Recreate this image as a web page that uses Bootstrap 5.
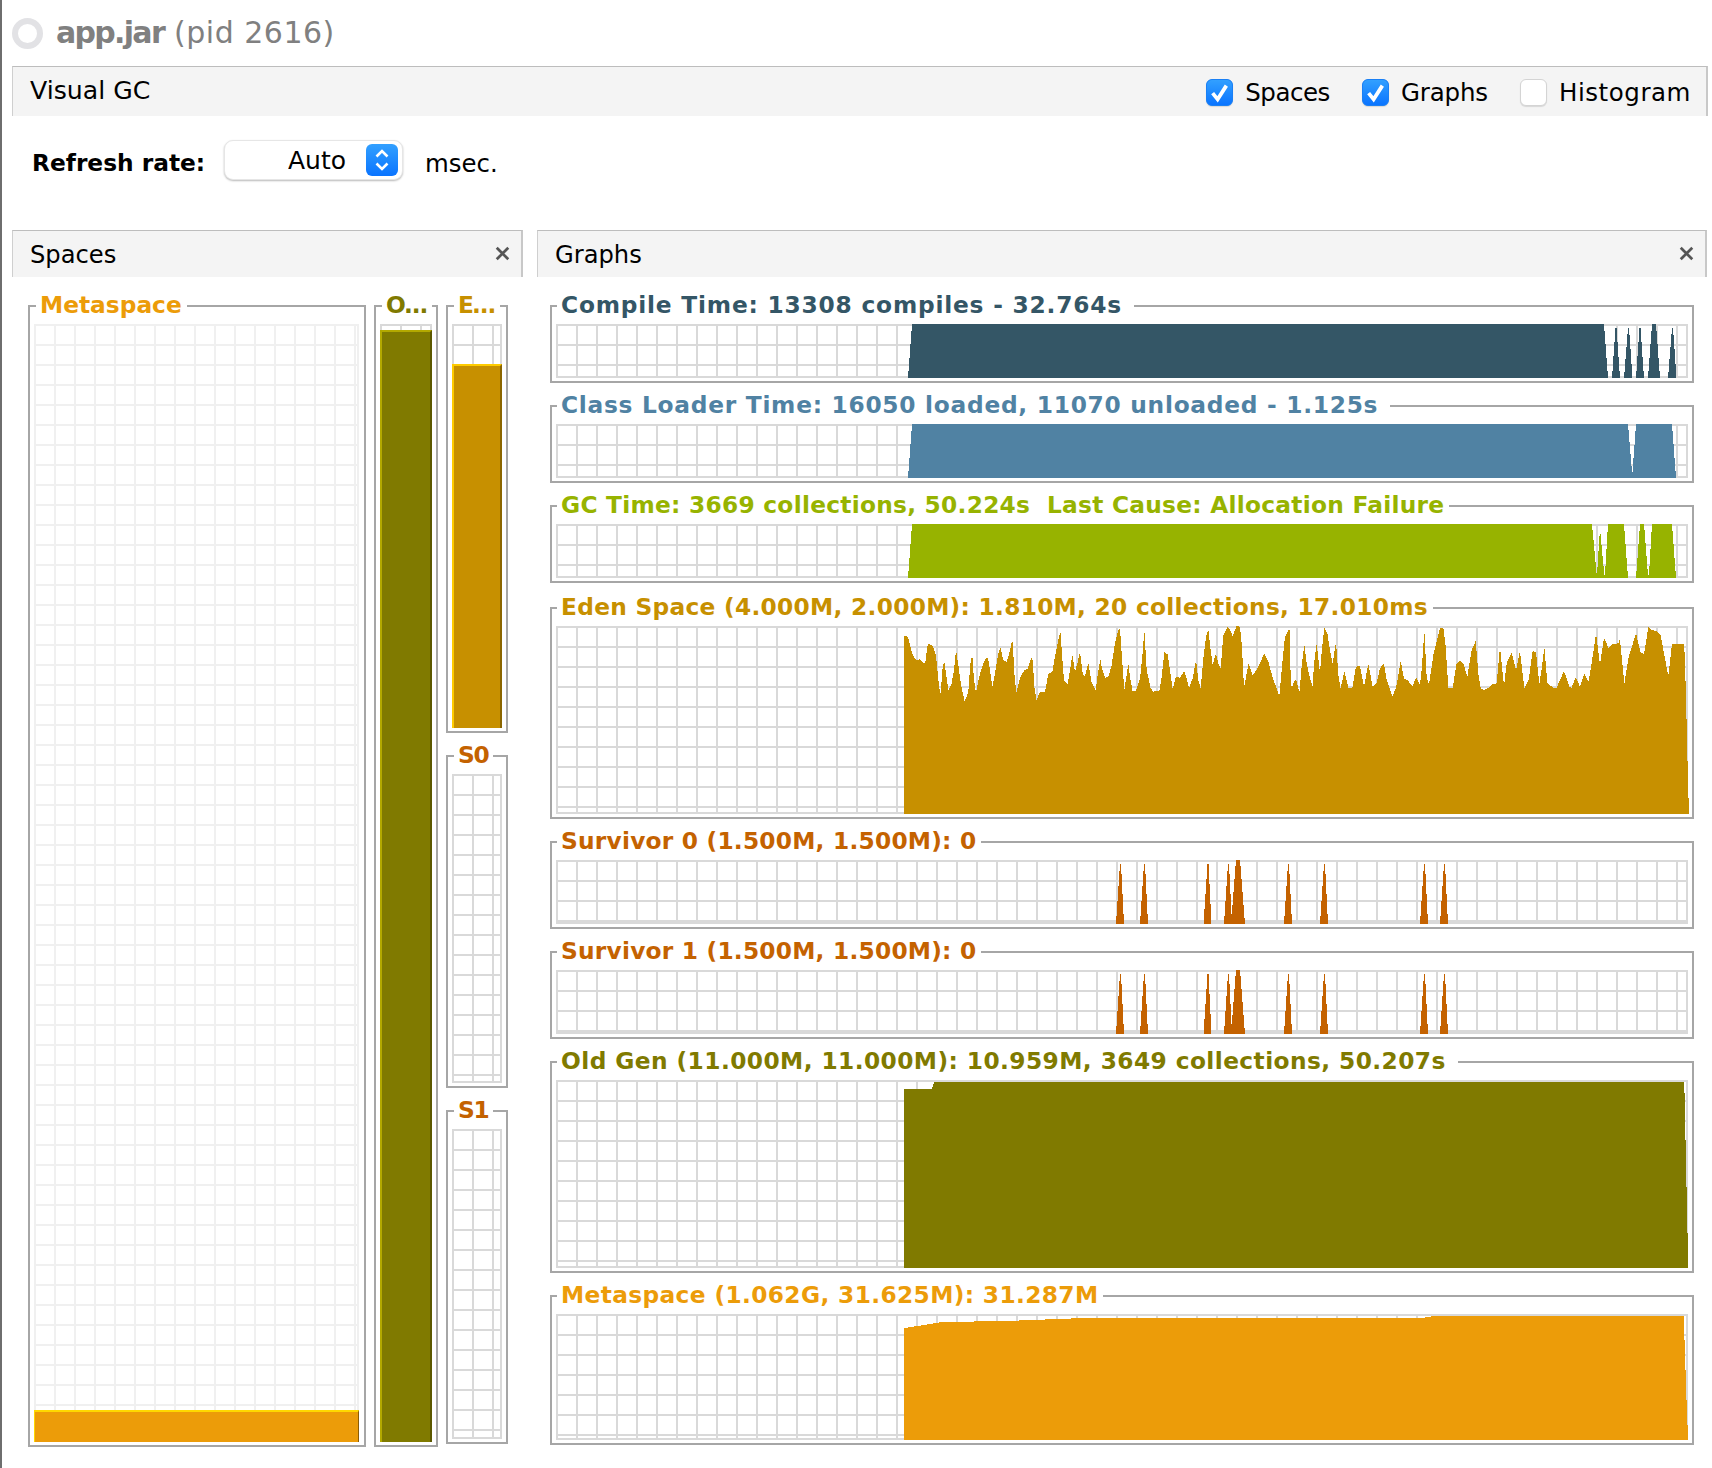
<!DOCTYPE html>
<html lang="en">
<head>
<meta charset="utf-8">
<title>Visual GC</title>
<link href="https://cdn.jsdelivr.net/npm/bootstrap@5.3.0/dist/css/bootstrap.min.css" rel="stylesheet">
<style>
html,body{background:#fff;}
body{font-family:"DejaVu Sans",sans-serif;color:#000;font-size:24.5px;line-height:1.2;}
.shell{border-left:2px solid #6e6e6e;height:1468px;width:1712px;overflow:hidden;padding-right:4px;}
.app-head{height:66px;padding-left:10px;gap:13px;}
.ring{width:31px;height:31px;flex:none;border:6px solid #e2e2e5;border-radius:50%;}
.app-title{font-size:30px;color:#808080;letter-spacing:.5px;}
.app-title b{letter-spacing:-1.7px;margin-right:0;}
.tabbar{margin-left:10px;height:50px;background:#f4f4f4;border-top:1px solid #bdbdbd;border-left:1px solid #cfcfcf;border-right:2px solid #c8c8c8;padding-left:17px;padding-right:15px;}
.tab-name{font-size:25.2px;}
.chk-row{gap:32px;padding-top:3px;}
.chk-item{gap:12px;}
.ls-sp{letter-spacing:-.45px;}
.ls-gr{letter-spacing:-.15px;}
.ls-hi{letter-spacing:.55px;}
.tabbar .form-check-input{width:27px;height:27px;flex:none;margin:0;border-radius:6px;border:1px solid #d4d4d4;box-shadow:0 1px 1px rgba(0,0,0,.12);}
.tabbar .form-check-input:checked{border-color:#1a80f5;background-color:#0a7bff;background-size:25px 25px,auto;background-position:center;background-repeat:no-repeat;background-image:url("data:image/svg+xml,%3csvg xmlns='http://www.w3.org/2000/svg' viewBox='0 0 20 20'%3e%3cpath fill='none' stroke='%23fff' stroke-width='3' d='M4.5 10.500l4 5 7-11'/%3e%3c/svg%3e"),linear-gradient(#32a0ff,#0a74ff);}
.rate-row{height:114px;padding-left:30px;padding-bottom:26px;}
.rate-lbl{font-size:23.3px;font-weight:700;width:192px;padding-top:5px;}
.rate-sel{width:179px;height:40px;padding:2px 0 0 63px;font-size:25px;line-height:36px;color:#000;border:1px solid #e6e6e6;border-radius:9px;box-shadow:0 1px 2px rgba(0,0,0,.28);background-color:#fff;background-repeat:no-repeat;background-position:right 4px center;background-size:32px 32px;background-image:url("data:image/svg+xml,%3csvg xmlns='http://www.w3.org/2000/svg' viewBox='0 0 32 32'%3e%3cdefs%3e%3clinearGradient id='g' x2='0' y2='1'%3e%3cstop offset='0' stop-color='%2332a0ff'/%3e%3cstop offset='1' stop-color='%230a74ff'/%3e%3c/linearGradient%3e%3c/defs%3e%3crect width='32' height='32' rx='6' fill='url(%23g)'/%3e%3cpath fill='none' stroke='%23fff' stroke-width='2.6' d='M10.500 12.500l5.500-5.500 5.500 5.500M10.500 19.500l5.500 5.500 5.500-5.500'/%3e%3c/svg%3e");}
.rate-unit{margin-left:22px;font-size:24.4px;padding-top:7px;}
.panels{margin-left:10px;gap:14px;}
.pane-spaces{width:511px;flex:none;}
.pane-graphs{width:1170px;flex:none;}
.pane-head{height:47px;background:#f4f4f4;border-top:1px solid #bdbdbd;border-left:1px solid #cfcfcf;border-right:2px solid #c8c8c8;padding:3px 11px 0 17px;font-size:24.2px;}
.xmark{width:15px;height:15px;display:block;margin-top:-4px;}
.spaces-body{padding:28px 0 0 16px;gap:8px;}
.col-e{gap:22px;width:62px;flex:none;}
.gbox{border:2px solid #a6a6a6;padding:0 4px 3px;}
.sbox{border:2px solid #a6a6a6;padding:0 5px 3px 4px;flex:none;}
.sbox-o{width:64px;padding-right:4px;}
.sbox-e{width:62px;padding-right:4px;}
.sbox-m{width:338px;}
.ttl{font-weight:700;font-size:23.3px;line-height:26px;height:26px;white-space:nowrap;background:#fff;width:fit-content;margin:-15px 0 6px 2px;padding:0 5px 0 4px;}
.gbox .ttl{margin-left:1px;}
.ttl-wide{padding-right:12px;}
.ls-ct{letter-spacing:.8px;}.ls-cl{letter-spacing:.73px;}.ls-gc{letter-spacing:.26px;}.ls-ed{letter-spacing:.28px;}.ls-su{letter-spacing:.22px;}.ls-ol{letter-spacing:.42px;}.ls-me{letter-spacing:.36px;}
.ls-sh{letter-spacing:-1.3px;}
.plot{background-color:#fff;background-image:linear-gradient(to right,var(--gl) 2px,transparent 2px),linear-gradient(to bottom,var(--gl) 2px,transparent 2px);background-size:20px 20px;border-right:2px solid var(--gl);border-bottom:2px solid var(--gl);--gl:#d9d9d9;}
.plot-light{--gl:#f0f0f0;}
.plot svg{display:block;overflow:visible;margin:0 -2px -2px 0;}
.gbody{padding:28px 13px 0 13px;}
.gbody .gbox+.gbox{margin-top:22px;}
.gbody .gbox.gap-wide{margin-top:24px;}
.h54{height:54px;}.h188{height:188px;}.h64{height:64px;}.h126{height:126px;}
.h1118{height:1118px;}.h404{height:404px;}.h309{height:309px;}.h310{height:310px;}
.c-meta{color:#ec9c09;}.c-old{color:#807a00;}.c-eden{color:#c79000;}.c-sur{color:#c46200;}.c-gc{color:#97b300;}.c-cl{color:#5082a3;}.c-ct{color:#345666;}
svg polygon,svg path{shape-rendering:crispEdges;}
.fill-m{background:#ec9c09;border-top:2px solid #ffd800;border-left:1px solid #ffd800;border-right:1px solid #8a5c05;margin:0 -2px -2px 0;}
.fill-o{background:#807a00;border-top:2px solid #b3a900;border-left:2px solid #b3a900;border-right:2px solid #5c5800;margin:0 -2px -2px 0;}
.fill-e{background:#c79000;border-top:2px solid #ffcc00;border-left:2px solid #ffcc00;border-right:2px solid #8b6600;margin:0 -2px -2px 0;}
</style>
</head>
<body>
<div class="shell">
  <div class="app-head d-flex align-items-center">
    <div class="ring"></div>
    <div class="app-title"><b>app.jar</b> (pid 2616)</div>
  </div>
  <div class="tabbar d-flex align-items-center justify-content-between">
    <div class="tab-name">Visual GC</div>
    <div class="chk-row d-flex align-items-center">
      <label class="chk-item d-flex align-items-center ls-sp"><input class="form-check-input" type="checkbox" checked> Spaces</label>
      <label class="chk-item d-flex align-items-center ls-gr"><input class="form-check-input" type="checkbox" checked> Graphs</label>
      <label class="chk-item d-flex align-items-center ls-hi"><input class="form-check-input" type="checkbox"> Histogram</label>
    </div>
  </div>
  <div class="rate-row d-flex align-items-center">
    <div class="rate-lbl">Refresh rate:</div>
    <select class="form-select rate-sel"><option>Auto</option></select>
    <div class="rate-unit">msec.</div>
  </div>
  <div class="panels d-flex">
    <div class="pane-spaces">
      <div class="pane-head d-flex align-items-center justify-content-between">
        <div>Spaces</div>
        <svg class="xmark" viewBox="0 0 13 13"><path d="M1.500 1.500l10 10M11.500 1.500l-10 10" stroke="#555" stroke-width="2.4" fill="none" style="shape-rendering:auto"/></svg>
      </div>
      <div class="spaces-body d-flex">
        <div class="sbox sbox-m">
          <div class="ttl c-meta">Metaspace</div>
          <div class="plot plot-light h1118 d-flex flex-column justify-content-end"><div class="fill-m" style="height:32px"></div></div>
        </div>
        <div class="sbox sbox-o">
          <div class="ttl c-old ls-sh">O…</div>
          <div class="plot h1118 d-flex flex-column justify-content-end"><div class="fill-o" style="height:1112px"></div></div>
        </div>
        <div class="col-e d-flex flex-column">
          <div class="sbox sbox-e">
            <div class="ttl c-eden ls-sh">E…</div>
            <div class="plot h404 d-flex flex-column justify-content-end"><div class="fill-e" style="height:364px"></div></div>
          </div>
          <div class="sbox sbox-e">
            <div class="ttl c-sur ls-sh">S0</div>
            <div class="plot h309"></div>
          </div>
          <div class="sbox sbox-e">
            <div class="ttl c-sur ls-sh">S1</div>
            <div class="plot h310"></div>
          </div>
        </div>
      </div>
    </div>
    <div class="pane-graphs">
      <div class="pane-head d-flex align-items-center justify-content-between">
        <div>Graphs</div>
        <svg class="xmark" viewBox="0 0 13 13"><path d="M1.500 1.500l10 10M11.500 1.500l-10 10" stroke="#555" stroke-width="2.4" fill="none" style="shape-rendering:auto"/></svg>
      </div>
      <div class="gbody">
        <div class="gbox">
          <div class="ttl ttl-wide c-ct ls-ct">Compile Time: 13308 compiles - 32.764s</div>
          <div class="plot h54"><svg width="1132" height="54" viewBox="556 324 1132 54" fill="#345666">
            <polygon points="912,324 1604,324 1608,378 908,378"/>
            <polygon points="1615.500,328 1616.500,328 1620,378 1612,378"/>
            <polygon points="1628,328 1629,328 1632.500,378 1624,378"/>
            <polygon points="1639.500,328 1640.500,328 1644,378 1636,378"/>
            <polygon points="1652,324 1656,324 1660,378 1648,378"/>
            <polygon points="1672,328 1673,328 1676.500,378 1668,378"/>
          </svg></div>
        </div>
        <div class="gbox">
          <div class="ttl ttl-wide c-cl ls-cl">Class Loader Time: 16050 loaded, 11070 unloaded - 1.125s</div>
          <div class="plot h54"><svg width="1132" height="54" viewBox="556 424 1132 54" fill="#5082a3">
            <polygon points="912,424 1628,424 1632.300,475 1636,424 1672,424 1676,478 908,478"/>
          </svg></div>
        </div>
        <div class="gbox">
          <div class="ttl c-gc ls-gc">GC Time: 3669 collections, 50.224s&nbsp; Last Cause: Allocation Failure</div>
          <div class="plot h54"><svg width="1132" height="54" viewBox="556 524 1132 54" fill="#97b300">
            <polygon points="912,524 1592,524 1596.700,575 1597,575 1600,528 1604.300,575 1605,575 1608,524 1624,524 1628,578 908,578"/>
            <polygon points="1636,578 1640,524 1644,524 1648,575 1649,575 1652,524 1672,524 1676,578"/>
          </svg></div>
        </div>
        <div class="gbox gap-wide">
          <div class="ttl c-eden ls-ed">Eden Space (4.000M, 2.000M): 1.810M, 20 collections, 17.010ms</div>
          <div class="plot h188"><svg width="1132" height="188" viewBox="556 626 1132 188" fill="#c79000">
            <g transform="translate(890 620) scale(.33333)"><polygon points="42,582 42,48 54,50 60,75 68,105 78,120 90,118 100,130 106,128 112,80 116,72 128,78 138,105 144,170 148,205 152,222 158,140 163,126 170,175 175,210 185,190 192,150 198,90 205,135 213,195 224,245 235,215 241,130 247,105 252,180 258,218 270,160 285,118 294,112 300,150 307,200 315,160 325,100 331,82 340,120 350,125 358,100 365,66 369,66 372,150 379,218 390,175 403,150 412,147 424,114 428,120 433,200 439,240 450,217 465,215 475,162 487,155 495,110 505,60 511,33 516,100 522,183 533,192 540,150 547,103 555,155 562,130 570,97 578,160 585,170 595,127 604,185 617,212 623,165 631,118 637,150 645,173 655,170 665,135 675,70 685,30 690,25 695,100 703,210 710,165 715,132 720,170 728,215 738,212 750,175 757,110 763,28 770,150 782,205 790,215 800,212 808,212 815,170 823,97 833,103 840,150 848,207 858,170 870,173 883,153 890,175 897,205 908,175 918,120 925,180 932,205 940,115 948,50 955,28 962,90 968,135 978,100 985,130 992,145 1000,45 1012,22 1020,30 1028,48 1040,18 1050,20 1056,80 1062,205 1070,160 1076,130 1088,165 1100,150 1112,125 1122,100 1135,125 1150,180 1160,205 1168,228 1175,150 1185,50 1195,30 1200,30 1200,582"/></g>
            <g transform="translate(1290 620) scale(.33333)"><polygon points="0,582 0,125 5,205 12,185 18,178 28,218 35,140 43,72 50,130 60,175 68,200 72,130 80,72 90,158 96,85 103,22 112,40 120,90 128,130 138,65 145,165 152,205 163,153 175,203 187,203 198,140 210,138 222,200 235,132 248,200 260,190 270,145 282,130 290,180 307,228 318,205 325,165 332,123 342,175 355,183 367,200 378,172 390,195 396,140 403,30 410,170 417,195 430,105 450,25 460,22 467,80 475,203 488,203 500,130 510,123 520,130 532,170 545,90 557,63 565,160 572,205 583,210 595,203 608,192 620,190 630,80 637,150 642,198 650,130 665,97 678,150 690,93 703,205 716,180 728,92 738,97 748,192 756,140 763,80 772,190 790,203 800,203 822,153 838,200 845,203 857,172 870,200 883,160 895,187 905,130 918,40 930,135 942,52 955,83 968,72 985,70 990,58 1003,192 1015,115 1038,40 1052,97 1062,102 1075,22 1085,30 1100,33 1112,45 1120,90 1135,168 1146,72 1182,72 1184,105 1188,230 1191,360 1194,480 1197,582"/></g>
          </svg></div>
        </div>
        <div class="gbox">
          <div class="ttl c-sur ls-su">Survivor 0 (1.500M, 1.500M): 0</div>
          <div class="plot h64"><svg width="1132" height="64" viewBox="556 860 1132 64" fill="#c46200">
            <path d="M1120 864h1l3 60h-8zM1144 864h1l3 60h-8zM1207.500 864h1l3 60h-8zM1228 864h1l3 60h-8zM1236 860h4l5 64h-14zM1288 864h1l3 60h-8zM1324 864h1l3 60h-8zM1424 864h1l3 60h-8zM1444 864h1l3 60h-8z"/>
          </svg></div>
        </div>
        <div class="gbox">
          <div class="ttl c-sur ls-su">Survivor 1 (1.500M, 1.500M): 0</div>
          <div class="plot h64"><svg width="1132" height="64" viewBox="556 860 1132 64" fill="#c46200">
            <path d="M1120 864h1l3 60h-8zM1144 864h1l3 60h-8zM1207.500 864h1l3 60h-8zM1228 864h1l3 60h-8zM1236 860h4l5 64h-14zM1288 864h1l3 60h-8zM1324 864h1l3 60h-8zM1424 864h1l3 60h-8zM1444 864h1l3 60h-8z"/>
          </svg></div>
        </div>
        <div class="gbox">
          <div class="ttl ttl-wide c-old ls-ol">Old Gen (11.000M, 11.000M): 10.959M, 3649 collections, 50.207s</div>
          <div class="plot h188"><svg width="1132" height="188" viewBox="556 1080 1132 188" fill="#807a00">
            <polygon points="904,1268 904,1089 932,1089 934,1082 1684,1082 1684,1093 1685,1093 1685,1140 1686,1140 1686,1187 1687,1187 1687,1233 1688,1233 1688,1268"/>
          </svg></div>
        </div>
        <div class="gbox">
          <div class="ttl c-meta ls-me">Metaspace (1.062G, 31.625M): 31.287M</div>
          <div class="plot h126"><svg width="1132" height="126" viewBox="556 1314 1132 126" fill="#ec9c09">
            <polygon points="904,1440 904,1328 911,1327 924,1325 942,1322 1006,1321 1084,1318 1422,1318 1427,1317 1435,1316 1684,1316 1684,1340 1685,1340 1685,1370 1686,1370 1686,1400 1687,1400 1687,1425 1688,1425 1688,1440"/>
          </svg></div>
        </div>
      </div>
    </div>
  </div>
</div>
<script src="https://cdn.jsdelivr.net/npm/bootstrap@5.3.0/dist/js/bootstrap.bundle.min.js"></script>
</body>
</html>
